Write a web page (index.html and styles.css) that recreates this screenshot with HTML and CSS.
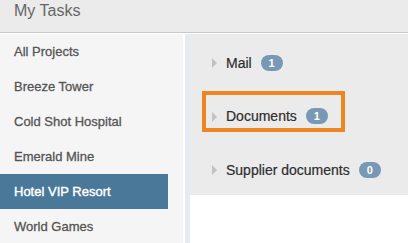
FILE: index.html
```html
<!DOCTYPE html>
<html>
<head>
<meta charset="utf-8">
<link rel="stylesheet" href="styles.css">
</head>
<body>
<div class="header">My Tasks</div>
<div class="main">
  <ul class="sidebar">
    <li class="project">All Projects</li>
    <li class="project">Breeze Tower</li>
    <li class="project">Cold Shot Hospital</li>
    <li class="project">Emerald Mine</li>
    <li class="project selected">Hotel VIP Resort</li>
    <li class="project">World Games</li>
  </ul>
  <div class="strip"></div>
  <div class="content">
    <div class="panel">
      <div class="item"><span class="arrow"></span><span class="label">Mail</span><span class="badge">1</span></div>
      <div class="item highlight"><span class="arrow"></span><span class="label">Documents</span><span class="badge">1</span></div>
      <div class="item"><span class="arrow"></span><span class="label">Supplier documents</span><span class="badge">0</span></div>
    </div>
  </div>
</div>
</body>
</html>
```

FILE: styles.css
```css
html, body {
  margin: 0;
  padding: 0;
  background: #ffffff;
  font-family: "Liberation Sans", Arial, sans-serif;
}
.header {
  height: 32px;
  line-height: 22px;
  padding-left: 14px;
  font-size: 16px;
  color: #666666;
  background: #ebebeb;
  border-bottom: 1px solid #c8c8c8;
  margin-bottom: 1px;
}
.main {
  display: flex;
  height: 209px;
}
.sidebar {
  list-style: none;
  margin: 0;
  padding: 0;
  width: 183px;
  background: #f5f5f5;
  margin-right: 2px;
}
.project {
  width: 154px;
  height: 35px;
  line-height: 35px;
  padding-left: 14px;
  font-size: 13px;
  color: #555555;
  -webkit-text-stroke: 0.3px #555555;
}
.project.selected {
  background: #4a7898;
  color: #ffffff;
  -webkit-text-stroke: 0.4px #ffffff;
}
.strip {
  width: 5px;
  background: #e5ebf1;
}
.content {
  flex: 1;
  background: #ffffff;
}
.panel {
  height: 161px;
  box-sizing: border-box;
  background: #ebebeb;
  padding: 3.5px 0 0 12px;
}
.item {
  display: flex;
  width: max-content;
  align-items: center;
  box-sizing: border-box;
  height: 41px;
  border: 4px solid transparent;
  padding: 13px 13px 4px 6px;
  margin-bottom: 12.5px;
}
.item.highlight {
  border-color: #ef8422;
}
.arrow {
  width: 0;
  height: 0;
  border-left: 5px solid #c2c2c2;
  border-top: 5px solid transparent;
  border-bottom: 5px solid transparent;
  margin-top: 1px;
  margin-right: 9px;
}
.label {
  font-size: 14px;
  line-height: 16px;
  color: #2e2e2e;
  -webkit-text-stroke: 0.2px #2e2e2e;
}
.badge {
  display: inline-block;
  margin-left: 9px;
  width: 22px;
  height: 16px;
  line-height: 16px;
  border-radius: 8px;
  background: #7899b5;
  color: #ffffff;
  font-size: 11px;
  font-weight: bold;
  text-align: center;
}
```
